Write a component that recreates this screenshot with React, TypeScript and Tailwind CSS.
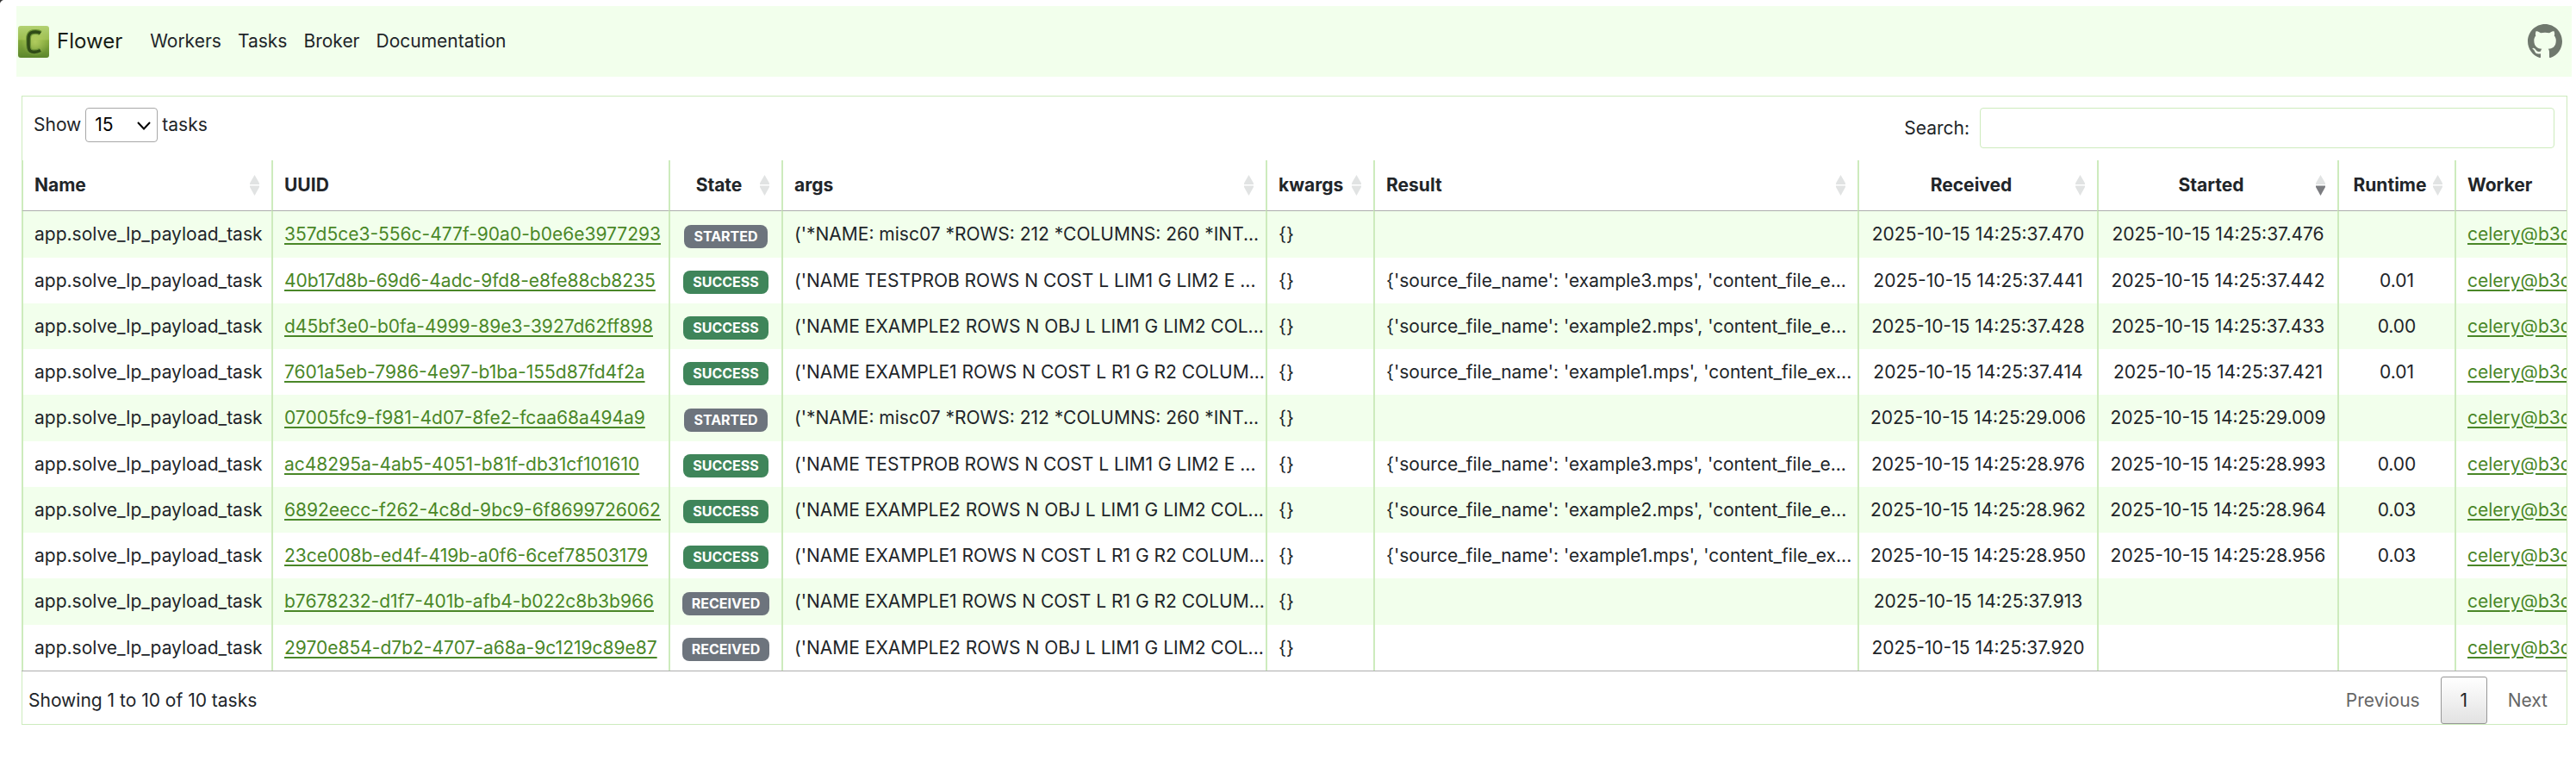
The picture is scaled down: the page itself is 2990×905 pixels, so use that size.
import React from "react";

type State = "STARTED" | "SUCCESS" | "RECEIVED";

interface Task {
  uuid: string;
  state: State;
  args: string;
  result: string;
  received: string;
  started: string;
  runtime: string;
}

const MISC = "('*NAME: misc07 *ROWS: 212 *COLUMNS: 260 *INT...";
const TESTPROB = "('NAME TESTPROB ROWS N COST L LIM1 G LIM2 E ...";
const EXAMPLE2 = "('NAME EXAMPLE2 ROWS N OBJ L LIM1 G LIM2 COL...";
const EXAMPLE1 = "('NAME EXAMPLE1 ROWS N COST L R1 G R2 COLUM...";
const RESULT3 = "{'source_file_name': 'example3.mps', 'content_file_e...";
const RESULT2 = "{'source_file_name': 'example2.mps', 'content_file_e...";
const RESULT1 = "{'source_file_name': 'example1.mps', 'content_file_ex...";

const tasks: Task[] = [
  { uuid: "357d5ce3-556c-477f-90a0-b0e6e3977293", state: "STARTED", args: MISC, result: "", received: "2025-10-15 14:25:37.470", started: "2025-10-15 14:25:37.476", runtime: "" },
  { uuid: "40b17d8b-69d6-4adc-9fd8-e8fe88cb8235", state: "SUCCESS", args: TESTPROB, result: RESULT3, received: "2025-10-15 14:25:37.441", started: "2025-10-15 14:25:37.442", runtime: "0.01" },
  { uuid: "d45bf3e0-b0fa-4999-89e3-3927d62ff898", state: "SUCCESS", args: EXAMPLE2, result: RESULT2, received: "2025-10-15 14:25:37.428", started: "2025-10-15 14:25:37.433", runtime: "0.00" },
  { uuid: "7601a5eb-7986-4e97-b1ba-155d87fd4f2a", state: "SUCCESS", args: EXAMPLE1, result: RESULT1, received: "2025-10-15 14:25:37.414", started: "2025-10-15 14:25:37.421", runtime: "0.01" },
  { uuid: "07005fc9-f981-4d07-8fe2-fcaa68a494a9", state: "STARTED", args: MISC, result: "", received: "2025-10-15 14:25:29.006", started: "2025-10-15 14:25:29.009", runtime: "" },
  { uuid: "ac48295a-4ab5-4051-b81f-db31cf101610", state: "SUCCESS", args: TESTPROB, result: RESULT3, received: "2025-10-15 14:25:28.976", started: "2025-10-15 14:25:28.993", runtime: "0.00" },
  { uuid: "6892eecc-f262-4c8d-9bc9-6f8699726062", state: "SUCCESS", args: EXAMPLE2, result: RESULT2, received: "2025-10-15 14:25:28.962", started: "2025-10-15 14:25:28.964", runtime: "0.03" },
  { uuid: "23ce008b-ed4f-419b-a0f6-6cef78503179", state: "SUCCESS", args: EXAMPLE1, result: RESULT1, received: "2025-10-15 14:25:28.950", started: "2025-10-15 14:25:28.956", runtime: "0.03" },
  { uuid: "b7678232-d1f7-401b-afb4-b022c8b3b966", state: "RECEIVED", args: EXAMPLE1, result: "", received: "2025-10-15 14:25:37.913", started: "", runtime: "" },
  { uuid: "2970e854-d7b2-4707-a68a-9c1219c89e87", state: "RECEIVED", args: EXAMPLE2, result: "", received: "2025-10-15 14:25:37.920", started: "", runtime: "" },
];

interface Column {
  label: string;
  width: string;
  center?: boolean;
  sort?: "none" | "desc";
}

const columns: Column[] = [
  { label: "Name", width: "w-[290px]", sort: "none" },
  { label: "UUID", width: "w-[461px]" },
  { label: "State", width: "w-[131px]", center: true, sort: "none" },
  { label: "args", width: "w-[562px]", sort: "none" },
  { label: "kwargs", width: "w-[125px]", sort: "none" },
  { label: "Result", width: "w-[562px]", sort: "none" },
  { label: "Received", width: "w-[278px]", center: true, sort: "none" },
  { label: "Started", width: "w-[279px]", center: true, sort: "desc" },
  { label: "Runtime", width: "w-[136px]", center: true, sort: "none" },
  { label: "Worker", width: "w-[280px]" },
];

const badgeColors: Record<State, string> = {
  STARTED: "bg-[#6d747d]",
  RECEIVED: "bg-[#6d747d]",
  SUCCESS: "bg-[#3f855a]",
};

function CeleryLogo() {
  return (
    <svg viewBox="0 0 36 37" className="h-[37px] w-9" aria-hidden="true">
      <defs>
        <linearGradient id="leaf" x1="0" y1="0" x2="0" y2="1">
          <stop offset="0" stopColor="#b3d273" />
          <stop offset="0.42" stopColor="#9bbd50" />
          <stop offset="0.46" stopColor="#86ab3e" />
          <stop offset="1" stopColor="#5c862c" />
        </linearGradient>
        <radialGradient id="glow" cx="0.55" cy="0.5" r="0.45">
          <stop offset="0" stopColor="#b5cf62" stopOpacity="0.9" />
          <stop offset="1" stopColor="#b5cf62" stopOpacity="0" />
        </radialGradient>
      </defs>
      <rect width="36" height="37" rx="3" fill="url(#leaf)" />
      <rect width="36" height="37" rx="3" fill="url(#glow)" />
      <path d="M26 8.500C23 6.500 18 6.500 15 8C12.500 9.500 12 12 12 15V22C12 27 13 29.500 16 30C19 30.800 23 30 26 28.500" fill="none" stroke="#6f9638" strokeWidth="6" />
      <path d="M26 8.500C23 6.500 18 6.500 15 8C12.500 9.500 12 12 12 15V22C12 27 13 29.500 16 30C19 30.800 23 30 26 28.500" fill="none" stroke="#304b17" strokeWidth="3.600" />
    </svg>
  );
}

function GithubMark() {
  return (
    <svg viewBox="0 0 16 16" className="size-10" fill="#6f786d" aria-hidden="true">
      <path d="M8 0C3.580 0 0 3.580 0 8c0 3.540 2.290 6.530 5.470 7.590.4.070.55-.17.55-.38 0-.19-.010-.82-.010-1.490-2.010.37-2.530-.49-2.690-.94-.090-.23-.48-.94-.82-1.130-.28-.15-.68-.52-.010-.53.63-.010 1.080.58 1.230.82.72 1.210 1.870.87 2.330.66.070-.52.28-.87.51-1.070-1.780-.2-3.640-.89-3.640-3.950 0-.87.31-1.590.82-2.150-.080-.2-.36-1.020.080-2.120 0 0 .67-.21 2.200.82.64-.18 1.320-.27 2-.27s1.360.09 2 .27c1.530-1.040 2.200-.82 2.200-.82.44 1.100.16 1.920.080 2.120.51.56.82 1.270.82 2.150 0 3.070-1.870 3.750-3.650 3.950.29.25.54.73.54 1.480 0 1.070-.010 1.930-.010 2.200 0 .21.15.46.55.38A8.013 8.013 0 0 0 16 8c0-4.420-3.580-8-8-8" />
    </svg>
  );
}

function SortIcon({ desc }: { desc: boolean }) {
  return (
    <svg viewBox="0 0 11 24" className="h-6 w-[11px] shrink-0" aria-hidden="true">
      <path d="M5.500 0L11 9.500V11H0V9.500Z" fill="#e1e3e3" />
      <path d="M5.500 24L11 14V12.500H0V14Z" fill={desc ? "#7b7c80" : "#e1e3e3"} />
    </svg>
  );
}

function HeaderCell({ column }: { column: Column }) {
  return (
    <th scope="col" className="h-[59px] border-b border-l-2 border-b-[#adadad] border-l-[#cdebbd] pr-[14px] pl-[13px] text-left font-bold">
      <div className="flex items-center gap-1">
        <span className={column.center ? "grow text-center" : "grow"}>{column.label}</span>
        {column.sort && <SortIcon desc={column.sort === "desc"} />}
      </div>
    </th>
  );
}

function Cell({ center, children }: { center?: boolean; children?: React.ReactNode }) {
  return (
    <td className={`border-l-2 border-[#cdebbd] whitespace-nowrap ${center ? "text-center" : "pl-[13px] text-left"}`}>
      {children}
    </td>
  );
}

const linkStyle = "text-[#4a8728] underline decoration-2 underline-offset-3";

export default function App() {
  return (
    <div className="relative bg-white pt-[7px] pr-[5px] pl-[19px] font-[Inter,sans-serif] text-[21px] leading-8 text-[#212529]">
      <svg viewBox="0 0 4 4" className="absolute top-0 left-0 size-1" aria-hidden="true">
        <path d="M0 0H4C2 .5 .5 2 0 4Z" fill="#333" />
      </svg>

      <nav className="flex h-[82px] items-center bg-[#f2ffec] pr-[11px] pl-[2px]">
        <a href="#" className="mr-8 flex items-center gap-[9px] text-[24px] text-[#171c15]">
          <CeleryLogo />
          Flower
        </a>
        <div className="flex gap-[19px]">
          <a href="#workers">Workers</a>
          <a href="#tasks">Tasks</a>
          <a href="#broker">Broker</a>
          <a href="#docs">Documentation</a>
        </div>
        <a href="#github" aria-label="GitHub" className="ml-auto">
          <GithubMark />
        </a>
      </nav>

      <main className="mt-[22px] mr-[5px] ml-[6px] border border-[#cdebbd]">
        <div className="flex items-start justify-between pt-[13px] pr-[14px] pb-[14px] pl-[13px]">
          <div className="flex h-10 items-center gap-[5px]">
            <label htmlFor="length">Show</label>
            <div className="relative">
              <select id="length" defaultValue="15" className="block h-10 w-[84px] appearance-none rounded-[4px] border border-[#a8a8a8] bg-white pl-[10px] text-black">
                <option>15</option>
                <option>30</option>
                <option>50</option>
                <option>100</option>
              </select>
              <svg viewBox="0 0 16 10" className="pointer-events-none absolute top-4 right-2 h-[10px] w-4" aria-hidden="true">
                <path d="M1 1L8 8.500L15 1" fill="none" stroke="#000" strokeWidth="2" />
              </svg>
            </div>
            <span>tasks</span>
          </div>
          <div className="flex items-center gap-3">
            <label htmlFor="search">Search:</label>
            <input id="search" type="search" className="h-[47px] w-[667px] rounded-[4px] border border-[#cdebbd] bg-white px-2 outline-none" />
          </div>
        </div>

        <div className="-ml-px overflow-x-auto border-b border-[#adadad] [scrollbar-width:none]">
          <table className="w-full table-fixed border-separate border-spacing-0">
            <colgroup>
              {columns.map((column) => (
                <col key={column.label} className={column.width} />
              ))}
            </colgroup>
            <thead>
              <tr>
                {columns.map((column) => (
                  <HeaderCell key={column.label} column={column} />
                ))}
              </tr>
            </thead>
            <tbody>
              {tasks.map((task) => (
                <tr key={task.uuid} className="h-[53px] odd:bg-[#f2ffec] [&:nth-child(4n+1)]:h-[54px]">
                  <Cell>app.solve_lp_payload_task</Cell>
                  <Cell>
                    <a href={`#task/${task.uuid}`} className={linkStyle}>{task.uuid}</a>
                  </Cell>
                  <Cell center>
                    <div className="flex justify-center pt-1">
                      <span className={`rounded-[8px] px-[11px] text-[16px] leading-[27px] font-bold text-white ${badgeColors[task.state]}`}>
                        {task.state}
                      </span>
                    </div>
                  </Cell>
                  <Cell>{task.args}</Cell>
                  <Cell>{"{}"}</Cell>
                  <Cell>{task.result}</Cell>
                  <Cell center>{task.received}</Cell>
                  <Cell center>{task.started}</Cell>
                  <Cell center>{task.runtime}</Cell>
                  <Cell>
                    <a href="#worker" className={linkStyle}>celery@b3c</a>
                  </Cell>
                </tr>
              ))}
            </tbody>
          </table>
        </div>

        <div className="flex items-center justify-between pt-[6px] pr-[22px] pl-[7px]">
          <div>Showing 1 to 10 of 10 tasks</div>
          <div className="flex items-center gap-6 text-[#666]">
            <button type="button">Previous</button>
            <button type="button" className="h-[55px] w-[54px] rounded-[3px] border border-[#979797] bg-linear-to-b from-white to-[#e2e2e2] text-[#212529]">
              1
            </button>
            <button type="button">Next</button>
          </div>
        </div>
      </main>
    </div>
  );
}
